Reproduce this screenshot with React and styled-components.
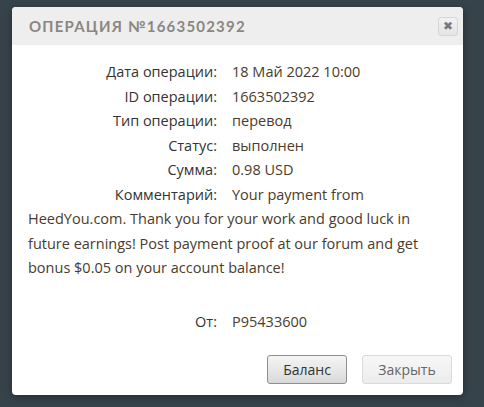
import styled, { createGlobalStyle } from 'styled-components';

const Global = createGlobalStyle`
  html, body {
    margin: 0;
    padding: 0;
    background: #37434a;
  }
  body {
    width: 484px;
    height: 407px;
    overflow: hidden;
  }
`;

const Page = styled.div`
  padding: 7px 0 0 12px;
`;

const Modal = styled.div`
  width: 451px;
  height: 388px;
  background: #fff;
  border-radius: 4px;
  display: flex;
  flex-direction: column;
  overflow: hidden;
  box-shadow: 0 2px 8px rgba(0, 0, 0, 0.35);
`;

const Header = styled.div`
  height: 38px;
  background: #eeeeee;
  display: flex;
  align-items: center;
  justify-content: space-between;
  padding: 0 5px 0 17px;
`;

const Title = styled.h2`
  margin: 0;
  font-family: Lato, 'DejaVu Sans', sans-serif;
  font-weight: 700;
  font-size: 15px;
  letter-spacing: 1.2px;
  color: #8b867f;
  text-transform: uppercase;
`;

const CloseX = styled.button`
  width: 20px;
  height: 19px;
  padding: 0;
  border: 1px solid #d6d6d6;
  border-radius: 3px;
  background: linear-gradient(#f2f2f2, #e4e4e4);
  color: #777;
  font-family: 'DejaVu Sans', sans-serif;
  font-size: 12px;
  font-weight: 700;
  line-height: 17px;
  cursor: pointer;
`;

const Body = styled.div`
  flex: 1;
  padding: 15px 16px 0 16px;
  font-family: 'Open Sans', sans-serif;
  font-size: 14.5px;
  line-height: 24.5px;
`;

const Row = styled.p`
  margin: ${(p) => p.$gap || 0}px 0 0;
`;

const Label = styled.span`
  display: inline-block;
  width: 189px;
  margin-right: 15px;
  text-align: right;
  color: #333;
`;

const Value = styled.span`
  color: #4a3b2c;
`;

const Footer = styled.div`
  display: flex;
  justify-content: flex-end;
  gap: 15px;
  padding: 0 11px 11px 0;
`;

const Button = styled.button`
  height: 29px;
  width: ${(p) => p.$w}px;
  border-radius: 3px;
  font-family: 'Open Sans', sans-serif;
  font-size: 14px;
  cursor: pointer;
  border: 1px solid ${(p) => (p.$muted ? '#dadada' : '#8e8e8e')};
  color: ${(p) => (p.$muted ? '#666' : '#333')};
  background: ${(p) =>
    p.$muted
      ? 'linear-gradient(#f7f7f7, #ececec)'
      : 'linear-gradient(#f4f4f4, #e6e6e6 55%, #d8d8d8)'};
`;

const rows = [
  ['Дата операции:', '18 Май 2022 10:00'],
  ['ID операции:', '1663502392'],
  ['Тип операции:', 'перевод'],
  ['Статус:', 'выполнен'],
  ['Сумма:', '0.98 USD'],
  [
    'Комментарий:',
    'Your payment from HeedYou.com. Thank you for your work and good luck in future earnings! Post payment proof at our forum and get bonus $0.05 on your account balance!',
  ],
];

export default function App() {
  return (
    <>
      <Global />
      <Page>
        <Modal>
          <Header>
            <Title>Операция №1663502392</Title>
            <CloseX>✖</CloseX>
          </Header>
          <Body>
            {rows.map(([k, v]) => (
              <Row key={k}>
                <Label>{k}</Label>
                <Value>{v}</Value>
              </Row>
            ))}
            <Row $gap={29}>
              <Label>От:</Label>
              <Value>P95433600</Value>
            </Row>
          </Body>
          <Footer>
            <Button $w={80}>Баланс</Button>
            <Button $w={90} $muted>
              Закрыть
            </Button>
          </Footer>
        </Modal>
      </Page>
    </>
  );
}
